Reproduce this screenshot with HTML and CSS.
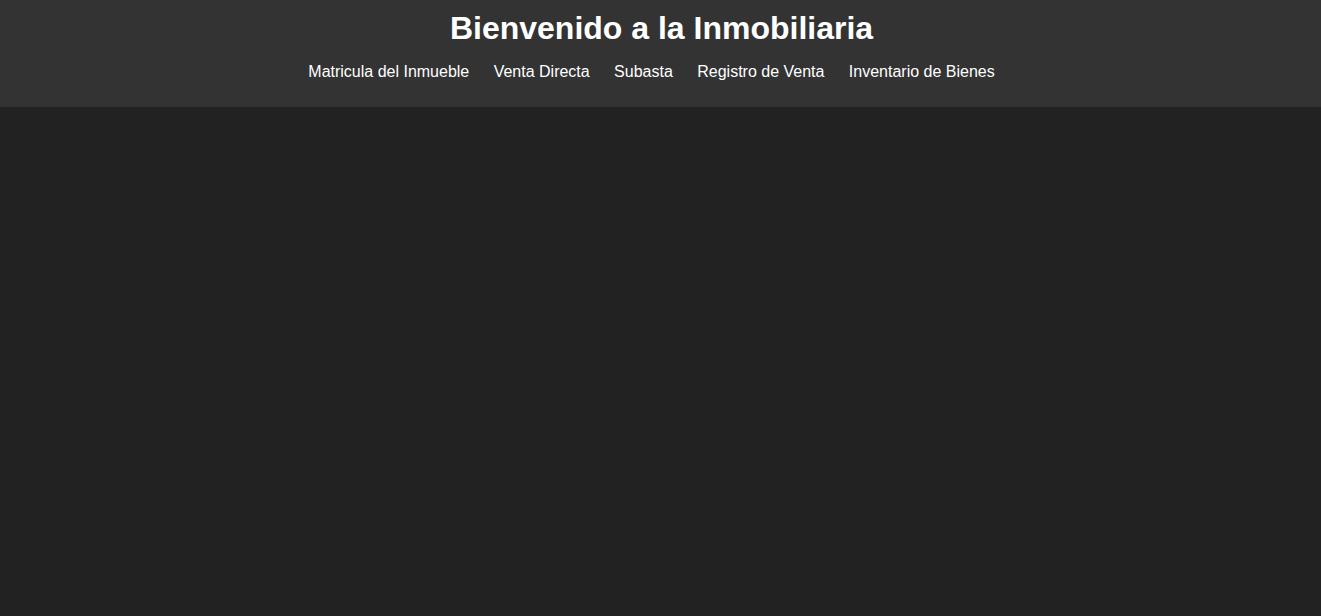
FILE: index.html
```html
<!DOCTYPE html>
<html lang="es">
<head>
<meta charset="utf-8">
<title>Inmobiliaria</title>
<link rel="stylesheet" href="styles.css">
</head>
<body>
<header class="site-header">
  <h1 class="title">Bienvenido a la Inmobiliaria</h1>
  <nav>
    <ul class="nav-list">
      <li><a href="#">Matricula del Inmueble</a></li>
      <li><a href="#">Venta Directa</a></li>
      <li><a href="#">Subasta</a></li>
      <li><a href="#">Registro de Venta</a></li>
      <li><a href="#">Inventario de Bienes</a></li>
    </ul>
  </nav>
</header>
<main class="content"></main>
</body>
</html>
```
FILE: styles.css
```css
html, body {
  margin: 0;
  padding: 0;
  height: 100%;
}
body {
  background: #222222;
  color: #ffffff;
  font-family: "Liberation Sans", Arial, sans-serif;
}
.site-header {
  background: #333333;
  padding: 10px 0 26px;
  display: flex;
  flex-direction: column;
  align-items: center;
}
.title {
  margin: 0 0 0 2px;
  font-size: 32px;
  line-height: 37px;
  font-weight: bold;
}
.nav-list {
  list-style: none;
  margin: 16px 0 0;
  padding: 0 18px 0 0;
  display: flex;
  gap: 24.4px;
  font-size: 16px;
  line-height: 18px;
}
.nav-list a {
  color: #ffffff;
  text-decoration: none;
}
```
